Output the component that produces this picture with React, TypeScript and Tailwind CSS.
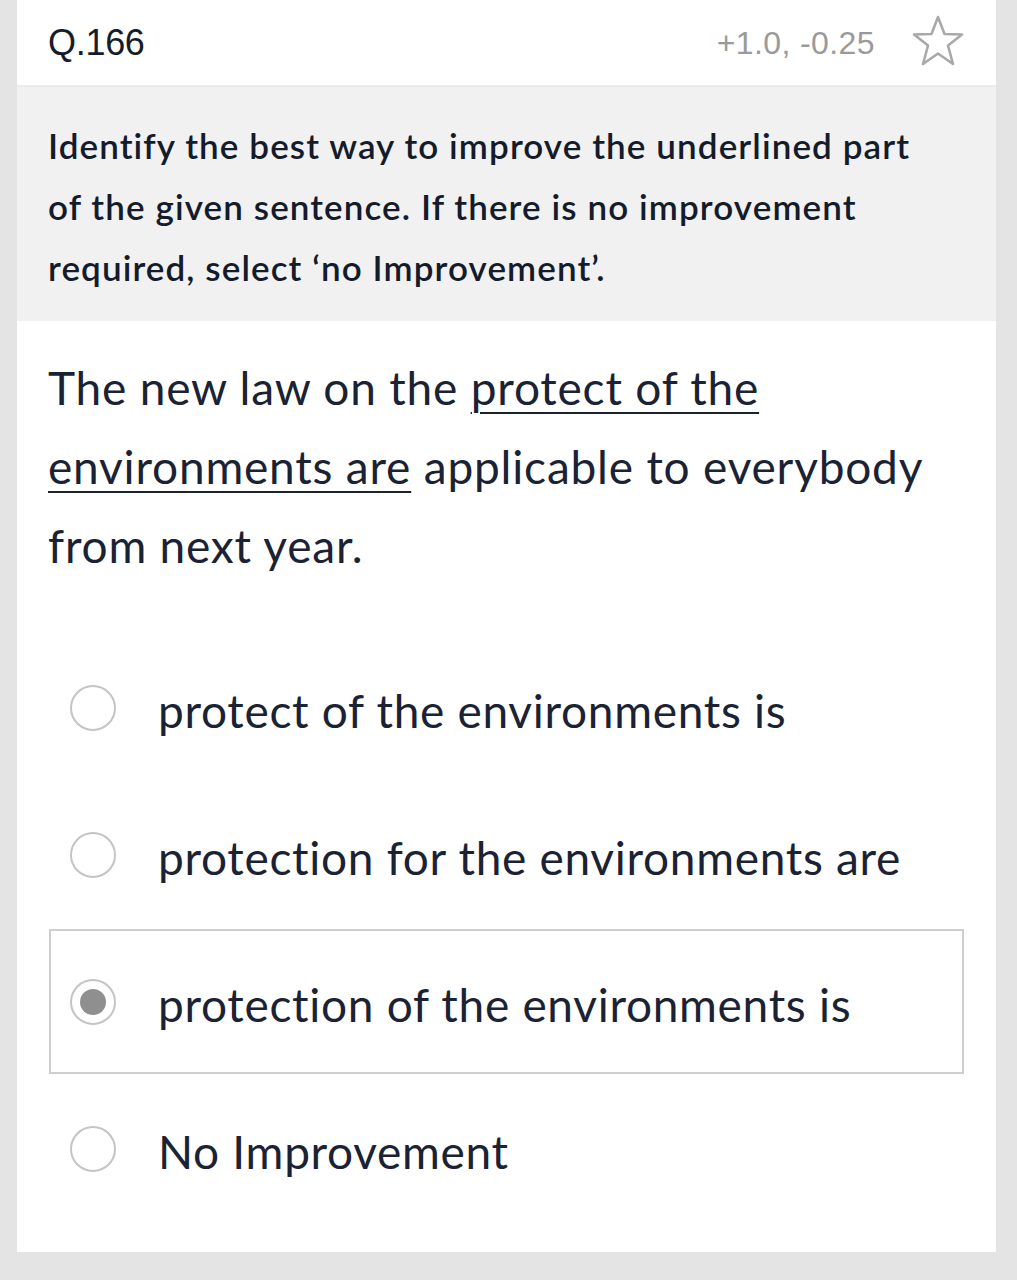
const options = [
  { text: "protect of the environments is", selected: false },
  { text: "protection for the environments are", selected: false },
  { text: "protection of the environments is", selected: true },
  { text: "No Improvement", selected: false },
];

const Star = () => (
  <svg width="54" height="52" viewBox="0 0 54 52" fill="none">
    <polygon
      points="27,2 33.5,19 51,19.5 37,30.5 42,49 27,38.5 12,49 17,30.5 3,19.5 20.5,19"
      stroke="#a9a9a9"
      strokeWidth="2.6"
      strokeLinejoin="round"
    />
  </svg>
);

const Radio = ({ checked }: { checked: boolean }) => (
  <div className="w-[46px] h-[46px] shrink-0 rounded-full border-[2.5px] border-[#c4c4c4] bg-white flex items-center justify-center">
    {checked && <div className="w-[26px] h-[26px] rounded-full bg-[#8f8f8f]" />}
  </div>
);

export default function App() {
  return (
    <div className="min-h-[1280px] bg-[#e4e4e4] pl-[17px] font-['Lato',sans-serif]">
      <div className="w-[979px] bg-white h-[1252px] flex flex-col">
        <div className="h-[87px] flex items-center border-b-2 border-[#ebebeb] pl-[31px] pr-[31px]">
          <div className="font-['Liberation_Sans',sans-serif] text-[36px] text-[#151c2a] tracking-[-0.3px]">Q.166</div>
          <div className="ml-auto font-['Liberation_Sans',sans-serif] text-[32px] text-[#9a9a9a] tracking-[0.4px]">
            +1.0, -0.25
          </div>
          <div className="ml-[36px] mt-[-4px]">
            <Star />
          </div>
        </div>

        <div className="bg-[#f1f1f1] pl-[31px] pr-[20px] pt-[28px] pb-[23px]">
          <p className="text-[35px] leading-[61px] font-semibold text-[#141b2b] tracking-[1.1px] whitespace-nowrap">
            Identify the best way to improve the underlined part
            <br />
            of the given sentence. If there is no improvement
            <br />
            required, select ‘no Improvement’.
          </p>
        </div>

        <div className="pl-[31px] pr-[20px] pt-[27px]">
          <p className="text-[46px] leading-[79px] text-[#1a2233] tracking-[0.8px] whitespace-nowrap">
            The new law on the{" "}
            <span className="underline decoration-[2px] underline-offset-[7px]">protect of the</span>
            <br />
            <span className="underline decoration-[2px] underline-offset-[7px]">environments are</span> applicable to
            everybody
            <br />
            from next year.
          </p>
        </div>

        <div className="mt-[50px] pl-[32px] pr-[32px] flex flex-col gap-[2px]">
          {options.map((o) => (
            <div
              key={o.text}
              className={
                o.selected
                  ? "h-[145px] flex items-center pl-[19px] gap-[42px] border-2 border-[#cfcfcf]"
                  : "h-[145px] flex items-center pl-[19px] gap-[42px] border-2 border-transparent"
              }
            >
              <Radio checked={o.selected} />
              <span className="mt-[6px] text-[46px] text-[#1a2233] tracking-[0.7px] whitespace-nowrap">{o.text}</span>
            </div>
          ))}
        </div>
      </div>
    </div>
  );
}
